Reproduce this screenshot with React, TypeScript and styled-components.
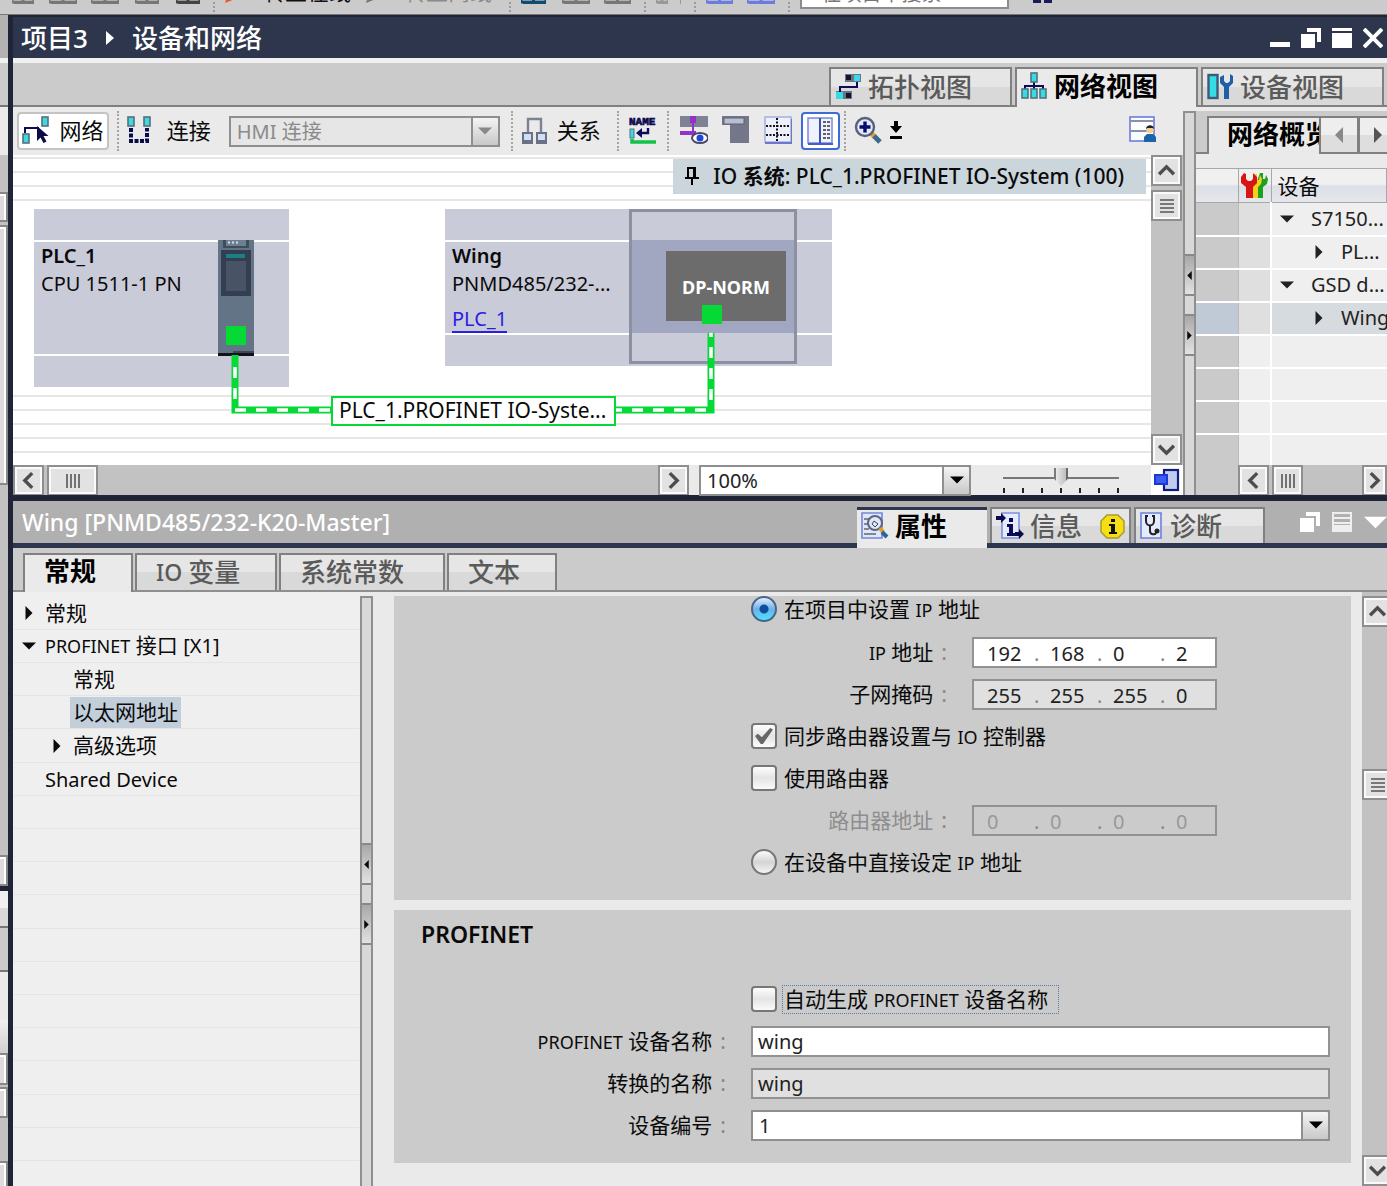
import React from "react";
import styled, { createGlobalStyle, css } from "styled-components";

const GlobalStyle = createGlobalStyle`
  *, *::before, *::after { box-sizing: border-box; }
  body { margin: 0; overflow: hidden; }
  body, button, input, select, table {
    font-family: "Noto Sans", "Noto Sans CJK SC", sans-serif;
    font-size: 20px;
    line-height: 28px;
    color: #0a0a0a;
  }
  button { padding: 0; border: 0; background: none; }
  svg { display: block; flex: none; }
`;

/* ---------- frame ---------- */

const Window = styled.div`
  display: flex;
  flex-direction: column;
  height: 100vh;
  background: #cbcbcb;
  overflow: hidden;
`;

const MainToolbar = styled.header`
  display: flex;
  align-items: flex-end;
  flex: none;
  height: 15px;
  padding: 0 0 10px 12px;
  overflow: hidden;
  border-bottom: 1px solid #777;
  background: #cbcbcb;
`;

const ToolStub = styled.span<{ $gap?: number }>`
  flex: none;
  margin-left: ${(p) => p.$gap ?? 0}px;
`;

const StripText = styled.span<{ $dim?: boolean }>`
  flex: none;
  width: 92px;
  margin-left: 18px;
  font-size: 22px;
  line-height: 26px;
  color: ${(p) => (p.$dim ? "#8a8a8a" : "#111")};
`;

const StripSep = styled.span`
  flex: none;
  height: 30px;
  margin: 0 10px -8px 13px;
  border-left: 2px dotted #999;
`;

const SearchInput = styled.input`
  flex: none;
  width: 209px;
  height: 32px;
  margin-bottom: -5px;
  padding: 0 8px;
  border: 2px solid #8c8c8c;
  background: #fff;
  &::placeholder { color: #777; opacity: 1; }
`;

const Body = styled.div`
  display: flex;
  flex: 1;
  min-height: 0;
`;

const LeftRail = styled.aside`
  display: flex;
  flex-direction: column;
  flex: none;
  width: 13px;
  border-right: 5px solid #1f2537;
  overflow: hidden;
`;

const RailPart = styled.div<{ $h: number; $bg: string; $line?: boolean }>`
  flex: none;
  height: ${(p) => p.$h}px;
  background: ${(p) => p.$bg};
  border-bottom: ${(p) => (p.$line ? "2px solid #777" : "0")};
`;

const RailKnob = styled.div<{ $h: number }>`
  flex: none;
  height: ${(p) => p.$h}px;
  border: 2px solid #888;
  border-left: 0;
  background: #dcdcda;
  box-shadow: inset -2px 2px #fff;
`;

const Main = styled.main`
  display: flex;
  flex-direction: column;
  flex: 1;
  min-width: 0;
`;

const TitleBar = styled.div`
  display: flex;
  align-items: center;
  flex: none;
  height: 43px;
  padding: 0 4px 0 8px;
  background: #2e364d;
  border-top: 2px solid #1d2433;
  color: #fff;
`;

const Title = styled.h1`
  display: flex;
  align-items: center;
  flex: 1;
  gap: 18px;
  margin: 0;
  font-size: 26px;
  line-height: 32px;
  font-weight: 500;
`;

const WindowButtons = styled.div`
  display: flex;
  align-items: center;
  gap: 11px;
`;

/* ---------- tabs ---------- */

const ViewTabs = styled.nav`
  display: flex;
  align-items: flex-end;
  justify-content: flex-end;
  flex: none;
  height: 49px;
  padding-right: 3px;
  gap: 3px;
  border-top: 5px solid #f0f0f0;
  border-bottom: 2px solid #808080;
  background: #cbcbcb;
`;

const tabBase = css<{ $active?: boolean }>`
  display: flex;
  align-items: center;
  flex: none;
  border: 2px solid #808080;
  border-bottom: 0;
  white-space: nowrap;
  font-size: 26px;
  line-height: 34px;
  font-weight: ${(p) => (p.$active ? 700 : 500)};
  color: ${(p) => (p.$active ? "#000" : "#5a5a5a")};
  background: ${(p) =>
    p.$active ? "#eaeaea" : "linear-gradient(#e6e6e6 0 50%, #d9d9d9 50% 100%)"};
`;

const ViewTab = styled.button<{ $active?: boolean }>`
  ${tabBase}
  width: 183px;
  height: ${(p) => (p.$active ? 40 : 38)}px;
  margin-bottom: ${(p) => (p.$active ? -2 : 0)}px;
  padding: 0 4px ${(p) => (p.$active ? 4 : 0)}px;
  gap: 6px;
`;

/* ---------- editor ---------- */

const Editor = styled.section`
  display: flex;
  flex: none;
  height: 388px;
  background: #eaeaea;
`;

const NetworkPane = styled.div`
  display: flex;
  flex-direction: column;
  flex: 1;
  min-width: 0;
`;

const Toolbar = styled.div`
  display: flex;
  align-items: center;
  flex: none;
  height: 48px;
  padding: 0 26px 0 4px;
`;

const ToolButton = styled.button<{ $pressed?: boolean; $w?: number; $gap?: number }>`
  display: flex;
  align-items: center;
  justify-content: center;
  flex: none;
  gap: 9px;
  width: ${(p) => (p.$w ? p.$w + "px" : "auto")};
  height: 38px;
  margin-left: ${(p) => p.$gap ?? 0}px;
  padding-bottom: 2px;
  font-size: 22px;
  line-height: 28px;
  ${(p) =>
    p.$pressed &&
    css`
      border: 2px solid #c4c4c4;
      border-radius: 4px;
      background: #fff;
    `}
`;

const SplitButton = styled(ToolButton)`
  padding: 0;
  border: 2px solid #3d6cd6;
  border-radius: 4px;
  background: #fff;
`;

const Sep = styled.span<{ $before?: number }>`
  flex: none;
  height: 40px;
  margin: 0 8px 0 ${(p) => p.$before ?? 8}px;
  border-left: 2px dotted #a4a4a4;
`;

const Spacer = styled.span`
  flex: 1;
`;

const ComboBox = styled.span<{ $w?: number; $fill?: boolean; $before?: number; $after?: number }>`
  display: flex;
  flex: ${(p) => (p.$fill ? 1 : "none")};
  width: ${(p) => (p.$w ? p.$w + "px" : "auto")};
  height: 31px;
  margin: 0 ${(p) => p.$after ?? 0}px 0 ${(p) => p.$before ?? 0}px;
  position: relative;
`;

const Select = styled.select<{ $off?: boolean }>`
  width: 100%;
  appearance: none;
  padding: 0 34px 0 6px;
  border: 2px solid #8f8f8f;
  border-radius: 0;
  background: ${(p) => (p.$off ? "#e6e6e6" : "#fff")};
  color: ${(p) => (p.$off ? "#8a8a8a" : "#222")};
  opacity: 1;
`;

const ComboArrow = styled.span<{ $off?: boolean }>`
  display: flex;
  align-items: center;
  justify-content: center;
  position: absolute;
  top: 0;
  right: 0;
  bottom: 0;
  width: 29px;
  border: 2px solid #8f8f8f;
  border-radius: 0 3px 3px 0;
  background: linear-gradient(#f4f4f4, #c8c8c8);
  color: ${(p) => (p.$off ? "#888" : "#000")};
  pointer-events: none;
`;

const CanvasRow = styled.div`
  display: flex;
  flex: 1;
  min-height: 0;
`;

const Canvas = styled.div`
  position: relative;
  flex: 1;
  overflow: hidden;
  background:
    linear-gradient(#fff, #fff) 0 50px / 100% 185px no-repeat,
    repeating-linear-gradient(#fff 0 2px, #e6e6e6 2px 4px, #fff 4px 14px);
`;

const SystemBadge = styled.div`
  position: absolute;
  top: 4px;
  right: 5px;
  display: flex;
  align-items: center;
  gap: 14px;
  height: 35px;
  padding: 0 22px 2px 12px;
  background: #cad6db;
  font-weight: 500;
  font-size: 21px;
  white-space: nowrap;
`;

const Device = styled.div<{ $x: number; $w: number; $h: number }>`
  position: absolute;
  top: 54px;
  left: ${(p) => p.$x}px;
  display: grid;
  grid-template-rows: 31px 1fr 31px;
  gap: 2px;
  width: ${(p) => p.$w}px;
  height: ${(p) => p.$h}px;
  background: #fff;
`;

const DeviceBand = styled.div`
  padding: 0 7px;
  background: #cacbd9;
`;

const DeviceName = styled.div`
  font-weight: 600;
  line-height: 28px;
`;

const DeviceType = styled.div`
  line-height: 28px;
  white-space: nowrap;
`;

const DeviceLink = styled.a`
  display: inline-block;
  margin-top: 8px;
  line-height: 25px;
  color: #2a1ee6;
  text-decoration: none;
  border-bottom: 2px solid #2a1ee6;
`;

const PlcModule = styled.div`
  position: absolute;
  top: 31px;
  left: 184px;
`;

const SlotFrame = styled.div`
  position: absolute;
  top: 0;
  right: 35px;
  display: grid;
  grid-template-rows: 28px 1fr 28px;
  width: 168px;
  height: 100%;
  border: 3px solid #8c91a2;
  background: #cacbd9;
`;

const SlotBand = styled.div`
  grid-row: 2;
  display: flex;
  justify-content: flex-end;
  padding: 11px 8px;
  background: #a1a6c1;
`;

const NormModule = styled.div`
  width: 120px;
  height: 70px;
  background: #6c6c6c;
  color: #fff;
  font-size: 18px;
  font-weight: 700;
  line-height: 72px;
  text-align: center;
`;

const Wires = styled.svg`
  position: absolute;
  top: 0;
  left: 0;
`;

const NetLabel = styled.div`
  position: absolute;
  top: 241px;
  left: 318px;
  width: 285px;
  height: 30px;
  padding: 0 6px;
  border: 2px solid #05d936;
  background: #fff;
  font-size: 21px;
  line-height: 25px;
  white-space: nowrap;
  overflow: hidden;
`;

/* ---------- scrollbars ---------- */

const VScroll = styled.div<{ $w: number }>`
  display: flex;
  flex-direction: column;
  flex: none;
  width: ${(p) => p.$w}px;
  overflow: hidden;
  background: #c2c2c2;
`;

const HScroll = styled.div`
  display: flex;
  flex: 1;
  min-width: 0;
  gap: 3px;
  height: 30px;
  background: #c2c2c2;
`;

const ScrollButton = styled.button<{ $w?: number; $mt?: number }>`
  display: flex;
  align-items: center;
  justify-content: center;
  flex: none;
  width: ${(p) => p.$w ?? 31}px;
  height: 31px;
  margin-top: ${(p) => p.$mt ?? 0}px;
  border: 2px solid #8f8f8f;
  background: #e2e2e2;
  box-shadow: inset 0 0 0 2px #fafafa;
`;

const BottomBar = styled.div`
  display: flex;
  align-items: center;
  flex: none;
  height: 30px;
`;

const ZoomSlider = styled.div`
  display: flex;
  flex-direction: column;
  width: 116px;
  margin: 0 32px;
`;

const Range = styled.input`
  appearance: none;
  width: 100%;
  height: 20px;
  margin: 0;
  background: linear-gradient(#777, #777) 0 10px / 100% 2px no-repeat;
  &::-webkit-slider-thumb {
    appearance: none;
    width: 14px;
    height: 18px;
    background: linear-gradient(90deg, #7a7a7a 0 2px, #e8e8e8 2px, #bdbdbd 12px, #6a6a6a 12px);
    clip-path: polygon(0 0, 100% 0, 100% 60%, 50% 100%, 0 60%);
  }
`;

const Ticks = styled.div`
  display: flex;
  justify-content: space-between;
  span { width: 2px; height: 5px; margin-top: 1px; background: #222; }
`;

const OverviewToggle = styled.button`
  display: flex;
  align-items: center;
  justify-content: center;
  width: 32px;
  height: 30px;
  background: #fff;
`;

/* ---------- splitter ---------- */

const Splitter = styled.div<{ $top: number; $pad: number }>`
  display: flex;
  flex-direction: column;
  flex: none;
  width: 13px;
  margin-top: ${(p) => p.$top}px;
  padding-top: ${(p) => p.$pad}px;
  gap: 18px;
  border: 2px solid #8f8f8f;
  border-bottom: 0;
  background: #d8d8d8;
`;

const SplitGrip = styled.button`
  display: flex;
  align-items: center;
  justify-content: center;
  width: 9px;
  height: 42px;
  border: solid #888;
  border-width: 2px 0;
  background: linear-gradient(#a8a8a8, #e2e2e2);
`;

/* ---------- overview ---------- */

const Overview = styled.div`
  display: flex;
  flex-direction: column;
  flex: none;
  width: 191px;
  padding-top: 4px;
  overflow: hidden;
`;

const OverviewTabs = styled.div`
  display: flex;
  align-items: flex-end;
  flex: none;
  height: 43px;
  padding-left: 11px;
  background: linear-gradient(#cbcbcb, #cbcbcb) 0 0 / 100% 5px no-repeat,
    linear-gradient(#808080, #808080) 0 100% / 11px 2px no-repeat,
    linear-gradient(#cbcbcb, #cbcbcb) 0 0 / 11px 100% no-repeat;
`;

const OverviewTab = styled.button`
  ${tabBase}
  width: 112px;
  height: 38px;
  padding: 0 0 4px 18px;
  border-right: 0;
  overflow: hidden;
`;

const PageButton = styled.button`
  display: flex;
  align-items: center;
  justify-content: center;
  flex: none;
  width: 40px;
  height: 38px;
  margin-right: -1px;
  border: 2px solid #808080;
  background: linear-gradient(#eee 0 50%, #dedede 50%);
`;

const TableBox = styled.div`
  flex: 1;
  min-height: 0;
  margin-top: 14px;
  overflow: hidden;
`;

const Table = styled.table`
  width: 100%;
  border-collapse: collapse;
  table-layout: fixed;
`;

const HeadRow = styled.tr`
  height: 34px;
  background: linear-gradient(#f0f0f0 0 45%, #dcdfe6 50%, #e6e8ec);
`;

const Th = styled.th<{ $w?: number; $pad?: number }>`
  width: ${(p) => (p.$w ? p.$w + "px" : "auto")};
  padding: 0 0 0 ${(p) => p.$pad ?? 6}px;
  border: solid #a8a8a8;
  border-width: 1px 1px 1px 0;
  font-size: 21px;
  font-weight: 400;
  text-align: left;
`;

const Tr = styled.tr<{ $selected?: boolean }>`
  height: 33px;
  border-bottom: 2px solid #fff;
  background: ${(p) => (p.$selected ? "#d6dbe0" : "#efefef")};
  & > td:nth-child(1) { background: ${(p) => (p.$selected ? "#bfcad6" : "#cacaca")}; border-right: 1px solid #bbb; }
  & > td:nth-child(2) { border-right: 2px solid #fff; }
`;

const Td = styled.td<{ $shade?: boolean }>`
  padding: 0;
  overflow: hidden;
  background: ${(p) => (p.$shade ? "#dfdfdf" : "transparent")};
`;

const CellLine = styled.div<{ $depth: number }>`
  display: flex;
  align-items: center;
  gap: ${(p) => (p.$depth ? 15 : 17)}px;
  height: 31px;
  padding-left: ${(p) => (p.$depth ? 40 : 8)}px;
  white-space: nowrap;
  color: #222;
`;

const OverviewScroll = styled.div`
  display: flex;
  flex: none;
  padding-left: 42px;
  background: #cacaca;
`;

/* ---------- inspector ---------- */

const Inspector = styled.section`
  display: flex;
  flex-direction: column;
  flex: 1;
  min-height: 0;
  border-top: 6px solid #1f2537;
`;

const InspectorBar = styled.div`
  display: flex;
  align-items: center;
  flex: none;
  height: 47px;
  padding-left: 9px;
  background: #b0b0b0;
  border-bottom: 5px solid #2e364d;
`;

const InspectorTitle = styled.h2`
  flex: 1;
  margin: 0;
  color: #fff;
  font-size: 23px;
  line-height: 30px;
  font-weight: 500;
`;

const InspectorTabs = styled.nav`
  display: flex;
  align-self: flex-end;
  align-items: flex-end;
  gap: 3px;
  margin-right: 35px;
`;

const InspectorTab = styled.button<{ $active?: boolean; $w: number }>`
  ${tabBase}
  width: ${(p) => p.$w}px;
  height: ${(p) => (p.$active ? 41 : 36)}px;
  margin-bottom: ${(p) => (p.$active ? -5 : 0)}px;
  padding: 0 4px ${(p) => (p.$active ? 7 : 0)}px;
  gap: 6px;
  ${(p) => p.$active && "border: 0; border-top: 3px solid #2e364d;"}
`;

const InspectorButtons = styled.div`
  display: flex;
  align-items: center;
  gap: 12px;
`;

const SubTabs = styled.nav`
  display: flex;
  align-items: flex-end;
  flex: none;
  height: 44px;
  padding-left: 10px;
  gap: 2px;
  background: #cbcbcb;
  border-bottom: 2px solid #8f8f8f;
`;

const SubTab = styled.button<{ $active?: boolean; $w: number }>`
  ${tabBase}
  width: ${(p) => p.$w}px;
  height: ${(p) => (p.$active ? 39 : 37)}px;
  margin-bottom: ${(p) => (p.$active ? -2 : 0)}px;
  padding: 0 19px ${(p) => (p.$active ? 6 : 2)}px;
`;

const InspectorBody = styled.div`
  display: flex;
  flex: 1;
  min-height: 0;
  background: #eaeaea;
`;

const Tree = styled.ul`
  flex: none;
  width: 347px;
  margin: 0;
  padding: 5px 1px 0;
  list-style: none;
  overflow: hidden;
  background: #efefef;
`;

const TreeRow = styled.li<{ $depth?: number }>`
  display: flex;
  align-items: center;
  gap: 8px;
  height: 33px;
  padding-left: ${(p) => (p.$depth ? 35 : 7)}px;
  border-bottom: 1px solid #e4e4e4;
  font-size: 21px;
  white-space: nowrap;
  &:nth-child(5n) { height: 34px; }
`;

const Twist = styled.span`
  display: flex;
  justify-content: center;
  flex: none;
  width: 16px;
`;

const TreeText = styled.span<{ $selected?: boolean }>`
  padding: 0 3px;
  margin-left: -3px;
  line-height: 31px;
  background: ${(p) => (p.$selected ? "#c3cedb" : "transparent")};
`;

const Latin = styled.span<{ $size?: number }>`
  font-size: ${(p) => p.$size ?? 18}px;
`;

const Properties = styled.div`
  flex: 1;
  min-width: 0;
  padding: 4px 11px 0 21px;
  overflow: hidden;
`;

const Panel = styled.section`
  display: flex;
  flex-direction: column;
  margin-bottom: 10px;
  padding: 0 21px 17px 27px;
  background: #cbcbcb;
`;

const PanelTitle = styled.h3`
  height: 68px;
  margin: 0;
  padding-top: 10px;
  font-size: 23px;
  line-height: 28px;
  font-weight: 600;
`;

const FormRow = styled.div<{ $first?: boolean; $label?: number }>`
  display: grid;
  grid-template-columns: ${(p) => p.$label ?? 330}px 1fr;
  align-items: ${(p) => (p.$first ? "start" : "center")};
  height: ${(p) => (p.$first ? 35 : 42)}px;
  font-size: 21px;
`;

const FieldLabel = styled.label<{ $off?: boolean }>`
  padding-right: 25px;
  text-align: right;
  white-space: nowrap;
  color: ${(p) => (p.$off ? "#8e8e8e" : "#0a0a0a")};
  &::after { content: ":"; margin-left: 8px; color: #888; }
`;

const Choice = styled.div`
  grid-column: 2;
  display: flex;
  align-items: center;
  gap: 6px;
  height: 26px;
`;

const ChoiceLabel = styled.label<{ $focus?: boolean }>`
  padding: 0 ${(p) => (p.$focus ? 10 : 0)}px 0 1px;
  line-height: 26px;
  white-space: nowrap;
  outline: ${(p) => (p.$focus ? "1px dotted #5a78a8" : "none")};
`;

const Check = styled.input`
  appearance: none;
  display: grid;
  place-items: center;
  flex: none;
  width: 26px;
  height: 26px;
  margin: 0;
  border: 2px solid #777;
  border-radius: 4px;
  background: linear-gradient(#fdfdfd, #e4e4e4 50%, #fafafa);
  &:checked::after {
    content: "";
    width: 18px;
    height: 16px;
    background: #666;
    clip-path: polygon(0 50%, 16% 36%, 38% 58%, 84% 0, 100% 10%, 44% 100%, 32% 100%);
  }
`;

const Radio = styled.input`
  appearance: none;
  flex: none;
  width: 26px;
  height: 26px;
  margin: 0;
  border: 2px solid #777;
  border-radius: 50%;
  background: linear-gradient(#fbfbfb, #d4d4d4 50%, #f4f4f4);
  &:checked {
    border-color: #4a6488;
    background:
      radial-gradient(circle, #0c4f9c 0 4px, transparent 5px),
      linear-gradient(#dfeefa, #6fb0ea 50%, #4be3fa);
  }
`;

const fieldBox = css<{ $tone?: "edit" | "read" | "off" }>`
  height: 31px;
  border: 2px solid #929292;
  background: ${(p) => (p.$tone === "read" ? "#e0e0e0" : p.$tone === "off" ? "#cbcbcb" : "#fff")};
  color: ${(p) => (p.$tone === "off" ? "#999" : "#222")};
`;

const TextInput = styled.input<{ $tone?: "edit" | "read" | "off" }>`
  ${fieldBox}
  width: 100%;
  min-width: 0;
  padding: 0 5px;
  border-radius: 0;
`;

const IpBox = styled.div<{ $tone?: "edit" | "read" | "off" }>`
  ${fieldBox}
  display: flex;
  width: 245px;
  padding-left: 13px;
`;

const Octet = styled.input`
  flex: none;
  width: 47px;
  height: 27px;
  padding: 3px 0 0;
  border: 0;
  outline: 0;
  background: transparent;
  color: inherit;
  &:last-child { width: 40px; }
`;

const Dot = styled.span`
  flex: none;
  width: 16px;
  line-height: 30px;
  font-size: 20px;
  color: #888;
`;

/* ---------- drawings ---------- */

type Dir = "up" | "down" | "left" | "right";
const turn: Record<Dir, number> = { up: 0, right: 90, down: 180, left: 270 };

const Tri = ({ dir, w = 14, color = "currentColor" }: { dir: Dir; w?: number; color?: string }) => (
  <svg width={w} height={w} viewBox="0 0 14 14">
    <path d="M0 10.5 7 3.5 14 10.5Z" fill={color} transform={`rotate(${turn[dir]} 7 7)`} />
  </svg>
);

const Chevron = ({ dir }: { dir: Dir }) => (
  <svg width="19" height="19" viewBox="0 0 18 18">
    <path d="M2 12.5 9 5.5 16 12.5" fill="none" stroke="#4d4d4d" strokeWidth="3.2" transform={`rotate(${turn[dir]} 9 9)`} />
  </svg>
);

const Grip = ({ vertical }: { vertical?: boolean }) => (
  <svg width="14" height="14" viewBox="0 0 14 14">
    <path
      d={vertical ? "M0 1h14M0 5h14M0 9h14M0 13h14" : "M1 0v14M5 0v14M9 0v14M13 0v14"}
      stroke="#555"
      strokeWidth="1.6"
    />
  </svg>
);

const StubIcon = ({ w, color, h = 12 }: { w: number; color: string; h?: number }) => (
  <svg width={w} height={h} viewBox={`0 0 ${w} ${h}`}>
    <rect width={w} height={h - 2} fill="#eee" />
    <path d={`M0 0H${w}V${h - 2}H0Z`} fill="none" stroke={color} strokeWidth="3" />
    <path d={`M${w / 2} 0v${h}`} stroke={color} strokeWidth="3" />
    <path d={`M2 ${h - 1}H${w}`} stroke={color} strokeWidth="2" />
  </svg>
);

const FlagStub = ({ color }: { color: string }) => (
  <svg width="20" height="14" viewBox="0 0 20 14">
    <path d="M0 13 3 3 20 0 10 9Z" fill={color} />
  </svg>
);

const NetworkIcon = () => (
  <svg width="28" height="30" viewBox="0 0 28 30">
    <rect x="20" y="2" width="6" height="9" fill="#3fd8e2" stroke="#55707c" strokeWidth="1.6" />
    <rect x="1" y="19" width="6" height="9" fill="#3fd8e2" stroke="#55707c" strokeWidth="1.6" />
    <path d="M3 18v-5h14" fill="none" stroke="#0b0b5a" strokeWidth="2" />
    <path d="M15 11v15l3.5-3.5 3 5.5 3-1.5-3-5.5h5Z" fill="#0b0b4a" />
  </svg>
);

const ConnectIcon = () => (
  <svg width="25" height="28" viewBox="0 0 25 28">
    <rect x="1" y="1" width="6" height="9" fill="#3fd8e2" stroke="#55707c" strokeWidth="1.6" />
    <rect x="17" y="1" width="6" height="9" fill="#3fd8e2" stroke="#55707c" strokeWidth="1.6" />
    <path d="M4 12v13h16V12" fill="none" stroke="#0b0b4a" strokeWidth="4" strokeDasharray="4 1.5" />
  </svg>
);

const RelationIcon = () => (
  <svg width="27" height="28" viewBox="0 0 27 28">
    <path d="M7 17V3h13v14" fill="none" stroke="#7b8294" strokeWidth="2.4" />
    <rect x="2" y="17" width="9" height="8" fill="#cfe0f4" stroke="#6a7184" strokeWidth="2" />
    <rect x="16" y="17" width="9" height="8" fill="#cfe0f4" stroke="#6a7184" strokeWidth="2" />
    <path d="M1 27h11M15 27h11" stroke="#6a7184" strokeWidth="2" />
  </svg>
);

const NameIcon = () => (
  <svg width="30" height="30" viewBox="0 0 30 30">
    <text x="1" y="10" fontFamily="Liberation Mono, monospace" fontSize="11" fontWeight="700" fill="#0b0b4a" stroke="#0b0b4a" strokeWidth="0.7">
      NAME
    </text>
    <rect x="2" y="14" width="4" height="9" fill="#3fd8e2" stroke="#55707c" />
    <path d="M20 13v5h-7" fill="none" stroke="#0b0b5a" strokeWidth="2.4" />
    <path d="M14 13v10l-6-5Z" fill="#0b0b5a" />
    <path d="M4 24v3h24" fill="none" stroke="#12c24a" strokeWidth="3.5" />
  </svg>
);

const AddressIcon = () => (
  <svg width="28" height="28" viewBox="0 0 28 28">
    <path d="M0 0h28v11H0Z" fill="#7e8294" />
    <path d="M10 0h6v7h-6ZM0 15h16v4H0Z" fill="#9331c9" />
    <path d="M13 5v11" stroke="#9331c9" strokeWidth="2" />
    <ellipse cx="20" cy="22" rx="8" ry="5" fill="#fff" stroke="#4c4668" strokeWidth="2" />
    <circle cx="20" cy="22" r="3.5" fill="#1c48d8" />
  </svg>
);

const PageBreakIcon = () => (
  <svg width="28" height="28" viewBox="0 0 28 28">
    <path d="M0 0h27v27H8V9H0Z" fill="#737789" />
    <rect x="2" y="2" width="20" height="6" fill="#b9bfd0" stroke="#5f6376" />
  </svg>
);

const GridIcon = () => (
  <svg width="28" height="28" viewBox="0 0 28 28">
    <rect x="1" y="1" width="26" height="25" fill="#eef1fc" stroke="#a4b0e0" strokeWidth="1.5" />
    <path d="M1 27h27V3" fill="none" stroke="#6d78c8" strokeWidth="2" />
    <path d="M2 10h24M2 19h24M13 2v23" stroke="#111" strokeWidth="2" strokeDasharray="2 1.5" />
  </svg>
);

const SplitIcon = () => (
  <svg width="26" height="28" viewBox="0 0 26 28">
    <rect x="1" y="1" width="24" height="25" fill="#eef2fe" stroke="#7a88d8" strokeWidth="1.5" />
    <path d="M13 1v25" stroke="#3b52b0" strokeWidth="2" />
    <path d="M1 27h25" stroke="#4a5cc4" strokeWidth="2" />
    <path d="M16 5h8M16 9h8M16 13h8M16 17h8M16 21h8" stroke="#333" strokeWidth="1.4" strokeDasharray="3 1" />
  </svg>
);

const ZoomIcon = () => (
  <svg width="28" height="30" viewBox="0 0 28 30">
    <path d="M17 18l4 4" stroke="#e0a020" strokeWidth="5" />
    <path d="M20 21l6 6" stroke="#3a6a94" strokeWidth="5" />
    <circle cx="11" cy="12" r="9" fill="#dfe9fb" stroke="#58607c" strokeWidth="2.4" />
    <path d="M11 6.5v11M5.5 12h11" stroke="#0b0b6a" strokeWidth="3.4" />
  </svg>
);

const DropIcon = () => (
  <svg width="14" height="20" viewBox="0 0 14 20">
    <path d="M5 1h4v5h4l-6 7-6-7h4ZM1 16h12v3H1Z" fill="#000" />
  </svg>
);

const SaveLayoutIcon = () => (
  <svg width="28" height="28" viewBox="0 0 28 28">
    <rect x="1" y="1" width="24" height="24" fill="#fbfcff" stroke="#6b7ce0" strokeWidth="1.6" />
    <path d="M1 5h24M1 15h24" stroke="#8a90a8" strokeWidth="2" />
    <path d="M15 26v-5l3-3h6l3 3v5Z" fill="#1d63a8" />
    <circle cx="21" cy="13.5" r="3.8" fill="#f3cf90" />
    <path d="M17 13c0-5 8-5 8 0l-1.5-1h-5Z" fill="#222" />
  </svg>
);

const PinIcon = () => (
  <svg width="14" height="20" viewBox="0 0 14 20">
    <path d="M3 12V2h7v10M9 2v10M0 12h14M7 12v7" fill="none" stroke="#000" strokeWidth="2" />
  </svg>
);

const TopologyIcon = () => (
  <svg width="27" height="28" viewBox="0 0 27 28">
    <path d="M10 1h16v8H10ZM1 18h16v8H1Z" fill="#6b7384" />
    <path d="M19 2h6v6h-6ZM1 19h7v7H1Z" fill="#34dde6" />
    <path d="M11 2h5v5h-5ZM11 20h5v5h-5Z" fill="#10162c" />
    <path d="M22 9v5H5v5" fill="none" stroke="#0b0b5a" strokeWidth="2" />
  </svg>
);

const NetViewIcon = () => (
  <svg width="27" height="28" viewBox="0 0 27 28">
    <path d="M13 9v9M4 19v-5h18v5" fill="none" stroke="#0b0b5a" strokeWidth="2" />
    {[[10, 1], [1, 17], [10, 17], [19, 17]].map(([x, y]) => (
      <rect key={`${x}-${y}`} x={x} y={y} width="6" height="9" fill="#34dde6" stroke="#54747e" strokeWidth="1.6" />
    ))}
  </svg>
);

const DeviceViewIcon = () => (
  <svg width="27" height="28" viewBox="0 0 27 28">
    <rect x="1.5" y="2" width="9" height="23" fill="#34dde6" stroke="#3e5a78" strokeWidth="2.4" />
    <path d="M13 4v6l4 4v12h5V14l4-4V3l-3-2v7l-2 2h-2l-2-2V2Z" fill="#1f5fa8" />
  </svg>
);

const ToolsIcon = () => (
  <svg width="27" height="27" viewBox="0 0 27 27">
    <path d="M19 1h3v6h2l1-4 2 4-1 5-4 3v11h-6V9Z" fill="#1fa01f" />
    <path d="M13 2h3v6h2l1-5 2 4-1 5-3 3v11h-6V9Z" fill="#f2d21a" />
    <path d="M3 1 0 5v6l5 4v11h7V15l4-4V5l-4-4v6l-2 2H7L5 7V2Z" fill="#d81414" />
  </svg>
);

const OverlapIcon = () => (
  <svg width="26" height="24" viewBox="0 0 26 24">
    <rect x="10" y="2" width="14" height="20" fill="#c2cbee" stroke="#101c7c" strokeWidth="2.2" />
    <rect x="1" y="7" width="12" height="9" fill="#3c5cf0" stroke="#1a38d8" strokeWidth="2" />
  </svg>
);

const PropsIcon = () => (
  <svg width="28" height="28" viewBox="0 0 28 28">
    <path d="M1 1h20v25H1Z" fill="#dfe8fb" stroke="#7486dc" strokeWidth="1.6" />
    <path d="M3 7h5M3 12h5M3 17h5M3 22h12" stroke="#666" strokeWidth="1.4" />
    <circle cx="14" cy="11" r="7" fill="#dde9fa" stroke="#5c6484" strokeWidth="2" />
    <path d="m11 12 2-3 4 3-3 3Z" fill="none" stroke="#444" />
    <path d="M19 16l3 4" stroke="#e0a020" strokeWidth="4" />
    <path d="M21 20l5 5" stroke="#2a64a0" strokeWidth="4" />
  </svg>
);

const InfoTabIcon = () => (
  <svg width="28" height="28" viewBox="0 0 28 28">
    <path d="M6 1h17v25H6Z" fill="#e4ebfc" stroke="#8090dc" strokeWidth="1.6" />
    <path d="M0 4h5V1l5 5-5 5V8H0ZM19 20h4v-3l5 5-5 5v-3h-4Z" fill="#0b0b4a" />
    <path d="M13 6h4v4h-4ZM11 12h6v9h3v3h-9v-3h2v-6h-2Z" fill="#0b0b5a" />
  </svg>
);

const BadgeInfo = () => (
  <svg width="25" height="25" viewBox="0 0 25 25">
    <path d="M7 1h11l6 6v11l-6 6H7l-6-6V7Z" fill="#f5de12" stroke="#a89a30" strokeWidth="1.5" />
    <path d="M11 5h4v3h-4ZM9 10h6v8h2v2H9v-2h2v-6H9Z" fill="#111" />
  </svg>
);

const DiagIcon = () => (
  <svg width="24" height="28" viewBox="0 0 24 28">
    <path d="M1 1h20v25H1Z" fill="#e4ebfc" stroke="#6c80dc" strokeWidth="1.6" />
    <path d="M6 4v5c0 6 8 6 8 0V4M10 14v5c0 4 5 4 6 2M5 4h3M12 4h3" fill="none" stroke="#222" strokeWidth="2" />
    <circle cx="17" cy="19" r="2.5" fill="#222" />
  </svg>
);

const MinimizeGlyph = () => (
  <svg width="20" height="20" viewBox="0 0 20 20"><path d="M0 14h20v5H0Z" fill="#fff" /></svg>
);
const RestoreGlyph = () => (
  <svg width="20" height="20" viewBox="0 0 20 20">
    <path d="M0 6h14v14H0ZM6 0h14v14h-4V4H6Z" fill="#fff" />
  </svg>
);
const MaximizeGlyph = () => (
  <svg width="20" height="20" viewBox="0 0 20 20"><path d="M0 0h20v3H0ZM0 5h20v15H0Z" fill="#fff" /></svg>
);
const CloseGlyph = () => (
  <svg width="20" height="20" viewBox="0 0 20 20"><path d="M1 1l18 18M19 1 1 19" stroke="#fff" strokeWidth="4" /></svg>
);
const ListGlyph = () => (
  <svg width="20" height="20" viewBox="0 0 20 20">
    <path d="M1 1h18v18H1ZM1 6h18M1 11h18" fill="none" stroke="#eee" strokeWidth="2" />
    <path d="M1 13h18v6H1Z" fill="#eee" />
  </svg>
);

const PlcDrawing = () => (
  <svg width="36" height="116" viewBox="0 0 36 116">
    <rect width="36" height="114" fill="#627486" />
    <rect x="5" width="26" height="8" fill="#3e4c5c" />
    <rect x="8" width="20" height="6" fill="#6d8092" />
    <path d="M10 2.5h10" stroke="#d4dde4" strokeWidth="2" strokeDasharray="2 2" />
    <rect x="3" y="10" width="30" height="46" fill="#343e50" />
    <rect x="8" y="14" width="19" height="4" fill="#1b7f86" />
    <rect x="8" y="21" width="20" height="30" fill="#485366" />
    <rect x="8" y="86" width="20" height="19" fill="#05d936" />
    <path d="M15 111h21v2H15Z" fill="#3b4857" />
    <rect y="113" width="36" height="3" fill="#10141a" />
  </svg>
);

const WireDrawing = () => (
  <Wires width="840" height="270">
    <g fill="none" stroke="#05d936" strokeWidth="7">
      <path d="M222 200V255H320" />
      <path d="M602 255H698V178" />
    </g>
    <g fill="none" stroke="#fff" strokeWidth="3.6">
      <path d="M222 212V247" strokeDasharray="11 10" />
      <path d="M222 255H320" strokeDasharray="11 10" />
      <path d="M602 255H694" strokeDasharray="11 10" strokeDashoffset="4" />
      <path d="M698 178V252" strokeDasharray="11 10" strokeDashoffset="7" />
    </g>
    <rect x="689" y="150" width="20" height="19" fill="#05d936" />
  </Wires>
);

/* ---------- composed parts ---------- */

const IpField = ({ id, parts, tone }: { id: string; parts: string[]; tone: "edit" | "read" | "off" }) => (
  <IpBox $tone={tone} role="group">
    {parts.map((v, i) => (
      <React.Fragment key={i}>
        {i > 0 && <Dot>.</Dot>}
        <Octet
          id={i === 0 ? id : undefined}
          aria-label={i > 0 ? `${id} ${i + 1}` : undefined}
          defaultValue={v}
          readOnly={tone === "read"}
          disabled={tone === "off"}
        />
      </React.Fragment>
    ))}
  </IpBox>
);

const treeRows: { text: React.ReactNode; depth?: number; twist?: Dir; selected?: boolean }[] = [
  { text: "常规", twist: "right" },
  { text: <><Latin>PROFINET</Latin> 接口 <Latin $size={20}>[X1]</Latin></>, twist: "down" },
  { text: "常规", depth: 1 },
  { text: "以太网地址", depth: 1, selected: true },
  { text: "高级选项", depth: 1, twist: "right" },
  { text: <Latin $size={20}>Shared Device</Latin> },
];

const deviceRows: { text: string; depth: number; open?: boolean; selected?: boolean }[] = [
  { text: "S7150...", depth: 0, open: true },
  { text: "PL...", depth: 1 },
  { text: "GSD d...", depth: 0, open: true },
  { text: "Wing", depth: 1, selected: true },
];

export default function App() {
  return (
    <>
      <GlobalStyle />
      <Window>
        <MainToolbar>
          <ToolStub><StubIcon w={22} color="#777" /></ToolStub>
          <ToolStub $gap={15}><StubIcon w={28} color="#777" /></ToolStub>
          <ToolStub $gap={14}><StubIcon w={28} color="#777" /></ToolStub>
          <ToolStub $gap={16}><StubIcon w={24} color="#777" h={10} /></ToolStub>
          <ToolStub $gap={17}><StubIcon w={24} color="#444" /></ToolStub>
          <StripSep />
          <FlagStub color="#f0552a" />
          <StripText>转至在线</StripText>
          <ToolStub $gap={11}><FlagStub color="#777" /></ToolStub>
          <StripText $dim>转至离线</StripText>
          <StripSep />
          <StubIcon w={25} color="#124a70" />
          <ToolStub $gap={16}><StubIcon w={28} color="#777" /></ToolStub>
          <ToolStub $gap={14}><StubIcon w={27} color="#777" /></ToolStub>
          <StripSep />
          <StubIcon w={12} color="#999" />
          <ToolStub $gap={12}><StubIcon w={1} color="#999" h={6} /></ToolStub>
          <StripSep />
          <StubIcon w={27} color="#6c7cd8" />
          <ToolStub $gap={14}><StubIcon w={28} color="#6c7cd8" /></ToolStub>
          <StripSep />
          <SearchInput aria-label="搜索" placeholder="<在项目中搜索>" />
          <ToolStub $gap={24}>
            <svg width="20" height="12"><path d="M0 0h8v11H0ZM11 0h8v11h-8Z" fill="#1a1a5c" /></svg>
          </ToolStub>
        </MainToolbar>

        <Body>
          <LeftRail>
            <RailPart $h={43} $bg="#b3b3b3" />
            <RailPart $h={5} $bg="#f0f0f0" />
            <RailPart $h={44} $bg="#cbcbcb" $line />
            <RailPart $h={48} $bg="#eaeaea" />
            <RailPart $h={37} $bg="#c2c2c2" />
            <RailKnob $h={30} />
            <RailPart $h={3} $bg="#c2c2c2" />
            <RailKnob $h={260} />
            <RailPart $h={370} $bg="#c2c2c2" />
            <RailKnob $h={31} />
            <RailPart $h={5} $bg="#1f2537" />
            <RailPart $h={37} $bg="linear-gradient(#f0f0f0 50%, #d9d9d9 50%)" $line />
            <RailPart $h={44} $bg="#cbcbcb" $line />
            <RailPart $h={48} $bg="#eaeaea" />
            <RailPart $h={33} $bg="linear-gradient(#f0f0f0, #cfcfcf)" />
            <RailKnob $h={32} />
            <RailPart $h={2} $bg="#c2c2c2" />
            <RailKnob $h={31} />
            <RailPart $h={43} $bg="#c2c2c2" />
            <RailKnob $h={31} />
          </LeftRail>

          <Main>
            <TitleBar>
              <Title>
                <span>项目3</span>
                <svg width="8" height="14"><path d="M0 0 8 7 0 14Z" fill="#fff" /></svg>
                <span>设备和网络</span>
              </Title>
              <WindowButtons>
                <button aria-label="最小化"><MinimizeGlyph /></button>
                <button aria-label="还原"><RestoreGlyph /></button>
                <button aria-label="最大化"><MaximizeGlyph /></button>
                <button aria-label="关闭"><CloseGlyph /></button>
              </WindowButtons>
            </TitleBar>

            <ViewTabs>
              <ViewTab><TopologyIcon />拓扑视图</ViewTab>
              <ViewTab $active><NetViewIcon />网络视图</ViewTab>
              <ViewTab><DeviceViewIcon />设备视图</ViewTab>
            </ViewTabs>

            <Editor>
              <NetworkPane>
                <Toolbar>
                  <ToolButton $pressed $w={92}><NetworkIcon />网络</ToolButton>
                  <Sep />
                  <ToolButton><ConnectIcon />&nbsp;连接</ToolButton>
                  <ComboBox $w={271} $before={18} $after={3}>
                    <Select $off disabled aria-label="连接类型" defaultValue="hmi">
                      <option value="hmi">HMI 连接</option>
                    </Select>
                    <ComboArrow $off><Tri dir="down" color="#888" /></ComboArrow>
                  </ComboBox>
                  <Sep />
                  <ToolButton><RelationIcon />关系</ToolButton>
                  <Sep $before={16} />
                  <ToolButton $w={32} aria-label="名称"><NameIcon /></ToolButton>
                  <Sep />
                  <ToolButton $w={34} aria-label="显示地址"><AddressIcon /></ToolButton>
                  <ToolButton $w={34} $gap={8} aria-label="分页"><PageBreakIcon /></ToolButton>
                  <ToolButton $w={34} $gap={8} aria-label="网格"><GridIcon /></ToolButton>
                  <SplitButton $w={39} $gap={6} aria-label="表格视图"><SplitIcon /></SplitButton>
                  <Sep $before={4} />
                  <ToolButton aria-label="缩放"><ZoomIcon /></ToolButton>
                  <ToolButton $gap={7} aria-label="缩放选项"><DropIcon /></ToolButton>
                  <Spacer />
                  <ToolButton aria-label="保存窗口设置"><SaveLayoutIcon /></ToolButton>
                </Toolbar>

                <CanvasRow>
                  <Canvas>
                    <Device $x={21} $w={255} $h={178}>
                      <DeviceBand />
                      <DeviceBand>
                        <DeviceName>PLC_1</DeviceName>
                        <DeviceType>CPU 1511-1 PN</DeviceType>
                      </DeviceBand>
                      <DeviceBand />
                      <PlcModule><PlcDrawing /></PlcModule>
                    </Device>
                    <Device $x={432} $w={387} $h={155}>
                      <DeviceBand />
                      <DeviceBand>
                        <DeviceName>Wing</DeviceName>
                        <DeviceType>PNMD485/232-...</DeviceType>
                        <DeviceLink href="#plc">PLC_1</DeviceLink>
                      </DeviceBand>
                      <DeviceBand />
                      <SlotFrame>
                        <SlotBand><NormModule>DP-NORM</NormModule></SlotBand>
                      </SlotFrame>
                    </Device>
                    <WireDrawing />
                    <NetLabel>PLC_1.PROFINET IO-Syste...</NetLabel>
                    <SystemBadge>
                      <PinIcon />
                      <span>IO <b>系统</b>: PLC_1.PROFINET IO-System (100)</span>
                    </SystemBadge>
                  </Canvas>
                  <VScroll $w={32}>
                    <ScrollButton aria-label="向上"><Chevron dir="up" /></ScrollButton>
                    <ScrollButton $mt={4} aria-label="滚动块"><Grip vertical /></ScrollButton>
                    <Spacer />
                    <ScrollButton aria-label="向下"><Chevron dir="down" /></ScrollButton>
                  </VScroll>
                </CanvasRow>

                <BottomBar>
                  <HScroll>
                    <ScrollButton aria-label="向左"><Chevron dir="left" /></ScrollButton>
                    <ScrollButton $w={51} aria-label="滚动块"><Grip /></ScrollButton>
                    <Spacer />
                    <ScrollButton aria-label="向右"><Chevron dir="right" /></ScrollButton>
                  </HScroll>
                  <ComboBox $w={272} $before={10}>
                    <Select aria-label="缩放比例" defaultValue="100">
                      <option value="100">100%</option>
                    </Select>
                    <ComboArrow><Tri dir="down" /></ComboArrow>
                  </ComboBox>
                  <ZoomSlider>
                    <Range type="range" aria-label="缩放" defaultValue={50} />
                    <Ticks>{Array.from({ length: 7 }, (_, i) => <span key={i} />)}</Ticks>
                  </ZoomSlider>
                  <OverviewToggle aria-label="总览"><OverlapIcon /></OverviewToggle>
                </BottomBar>
              </NetworkPane>

              <Splitter $top={4} $pad={141}>
                <SplitGrip aria-label="折叠左侧"><Tri dir="left" w={9} /></SplitGrip>
                <SplitGrip aria-label="折叠右侧"><Tri dir="right" w={9} /></SplitGrip>
              </Splitter>

              <Overview>
                <OverviewTabs>
                  <OverviewTab $active>网络概览</OverviewTab>
                  <PageButton aria-label="上一页"><Tri dir="left" color="#888" w={16} /></PageButton>
                  <PageButton aria-label="下一页"><Tri dir="right" color="#555" w={16} /></PageButton>
                </OverviewTabs>
                <TableBox>
                  <Table>
                    <thead>
                      <HeadRow>
                        <Th $w={42} aria-label="行" />
                        <Th $w={33} $pad={2} aria-label="状态"><ToolsIcon /></Th>
                        <Th>设备</Th>
                      </HeadRow>
                    </thead>
                    <tbody>
                      {deviceRows.map((r) => (
                        <Tr key={r.text} $selected={r.selected}>
                          <Td />
                          <Td $shade />
                          <Td>
                            <CellLine $depth={r.depth}>
                              <Tri dir={r.open ? "down" : "right"} />
                              {r.text}
                            </CellLine>
                          </Td>
                        </Tr>
                      ))}
                      {Array.from({ length: 4 }, (_, i) => (
                        <Tr key={i}><Td /><Td /><Td /></Tr>
                      ))}
                    </tbody>
                  </Table>
                </TableBox>
                <OverviewScroll>
                  <HScroll>
                    <ScrollButton aria-label="向左"><Chevron dir="left" /></ScrollButton>
                    <ScrollButton aria-label="滚动块"><Grip /></ScrollButton>
                    <Spacer />
                    <ScrollButton $w={25} aria-label="向右"><Chevron dir="right" /></ScrollButton>
                  </HScroll>
                </OverviewScroll>
              </Overview>
            </Editor>

            <Inspector>
              <InspectorBar>
                <InspectorTitle>Wing [PNMD485/232-K20-Master]</InspectorTitle>
                <InspectorTabs>
                  <InspectorTab $active $w={130}><PropsIcon />属性</InspectorTab>
                  <InspectorTab $w={141}><InfoTabIcon />信息<Spacer /><BadgeInfo /></InspectorTab>
                  <InspectorTab $w={131}><DiagIcon />诊断</InspectorTab>
                </InspectorTabs>
                <InspectorButtons>
                  <button aria-label="浮动"><RestoreGlyph /></button>
                  <button aria-label="列表"><ListGlyph /></button>
                  <button aria-label="折叠"><Tri dir="down" color="#fff" w={23} /></button>
                </InspectorButtons>
              </InspectorBar>

              <SubTabs>
                <SubTab $active $w={110}>常规</SubTab>
                <SubTab $w={142}><Latin $size={23}>IO&nbsp;</Latin>变量</SubTab>
                <SubTab $w={166}>系统常数</SubTab>
                <SubTab $w={110}>文本</SubTab>
              </SubTabs>

              <InspectorBody>
                <Tree>
                  {treeRows.map((r, i) => (
                    <TreeRow key={i} $depth={r.depth}>
                      <Twist>{r.twist && <Tri dir={r.twist} />}</Twist>
                      <TreeText $selected={r.selected}>{r.text}</TreeText>
                    </TreeRow>
                  ))}
                  {Array.from({ length: 12 }, (_, i) => <TreeRow key={`e${i}`} />)}
                </Tree>
                <Splitter $top={4} $pad={245}>
                  <SplitGrip aria-label="折叠左侧"><Tri dir="left" w={9} /></SplitGrip>
                  <SplitGrip aria-label="折叠右侧"><Tri dir="right" w={9} /></SplitGrip>
                </Splitter>

                <Properties>
                  <Panel>
                    <FormRow $first>
                      <Choice>
                        <Radio type="radio" name="ipmode" id="ip-project" defaultChecked />
                        <ChoiceLabel htmlFor="ip-project">在项目中设置 <Latin>IP</Latin> 地址</ChoiceLabel>
                      </Choice>
                    </FormRow>
                    <FormRow $label={551}>
                      <FieldLabel htmlFor="ip"><Latin>IP</Latin> 地址</FieldLabel>
                      <IpField id="ip" parts={["192", "168", "0", "2"]} tone="edit" />
                    </FormRow>
                    <FormRow $label={551}>
                      <FieldLabel htmlFor="mask">子网掩码</FieldLabel>
                      <IpField id="mask" parts={["255", "255", "255", "0"]} tone="read" />
                    </FormRow>
                    <FormRow>
                      <Choice>
                        <Check type="checkbox" id="sync" defaultChecked />
                        <ChoiceLabel htmlFor="sync">同步路由器设置与 <Latin>IO</Latin> 控制器</ChoiceLabel>
                      </Choice>
                    </FormRow>
                    <FormRow>
                      <Choice>
                        <Check type="checkbox" id="router" />
                        <ChoiceLabel htmlFor="router">使用路由器</ChoiceLabel>
                      </Choice>
                    </FormRow>
                    <FormRow $label={551}>
                      <FieldLabel $off htmlFor="router-ip">路由器地址</FieldLabel>
                      <IpField id="router-ip" parts={["0", "0", "0", "0"]} tone="off" />
                    </FormRow>
                    <FormRow>
                      <Choice>
                        <Radio type="radio" name="ipmode" id="ip-device" />
                        <ChoiceLabel htmlFor="ip-device">在设备中直接设定 <Latin>IP</Latin> 地址</ChoiceLabel>
                      </Choice>
                    </FormRow>
                  </Panel>

                  <Panel>
                    <PanelTitle>PROFINET</PanelTitle>
                    <FormRow>
                      <Choice>
                        <Check type="checkbox" id="auto-name" />
                        <ChoiceLabel $focus htmlFor="auto-name">自动生成 <Latin>PROFINET</Latin> 设备名称</ChoiceLabel>
                      </Choice>
                    </FormRow>
                    <FormRow>
                      <FieldLabel htmlFor="pn-name"><Latin>PROFINET</Latin> 设备名称</FieldLabel>
                      <TextInput id="pn-name" defaultValue="wing" />
                    </FormRow>
                    <FormRow>
                      <FieldLabel htmlFor="conv-name">转换的名称</FieldLabel>
                      <TextInput id="conv-name" $tone="read" readOnly defaultValue="wing" />
                    </FormRow>
                    <FormRow>
                      <FieldLabel htmlFor="dev-no">设备编号</FieldLabel>
                      <ComboBox $fill>
                        <Select id="dev-no" defaultValue="1"><option value="1">1</option></Select>
                        <ComboArrow><Tri dir="down" /></ComboArrow>
                      </ComboBox>
                    </FormRow>
                  </Panel>
                </Properties>

                <VScroll $w={25}>
                  <ScrollButton $mt={4} aria-label="向上"><Chevron dir="up" /></ScrollButton>
                  <ScrollButton $mt={142} aria-label="滚动块"><Grip vertical /></ScrollButton>
                  <Spacer />
                  <ScrollButton aria-label="向下"><Chevron dir="down" /></ScrollButton>
                </VScroll>
              </InspectorBody>
            </Inspector>
          </Main>
        </Body>
      </Window>
    </>
  );
}
